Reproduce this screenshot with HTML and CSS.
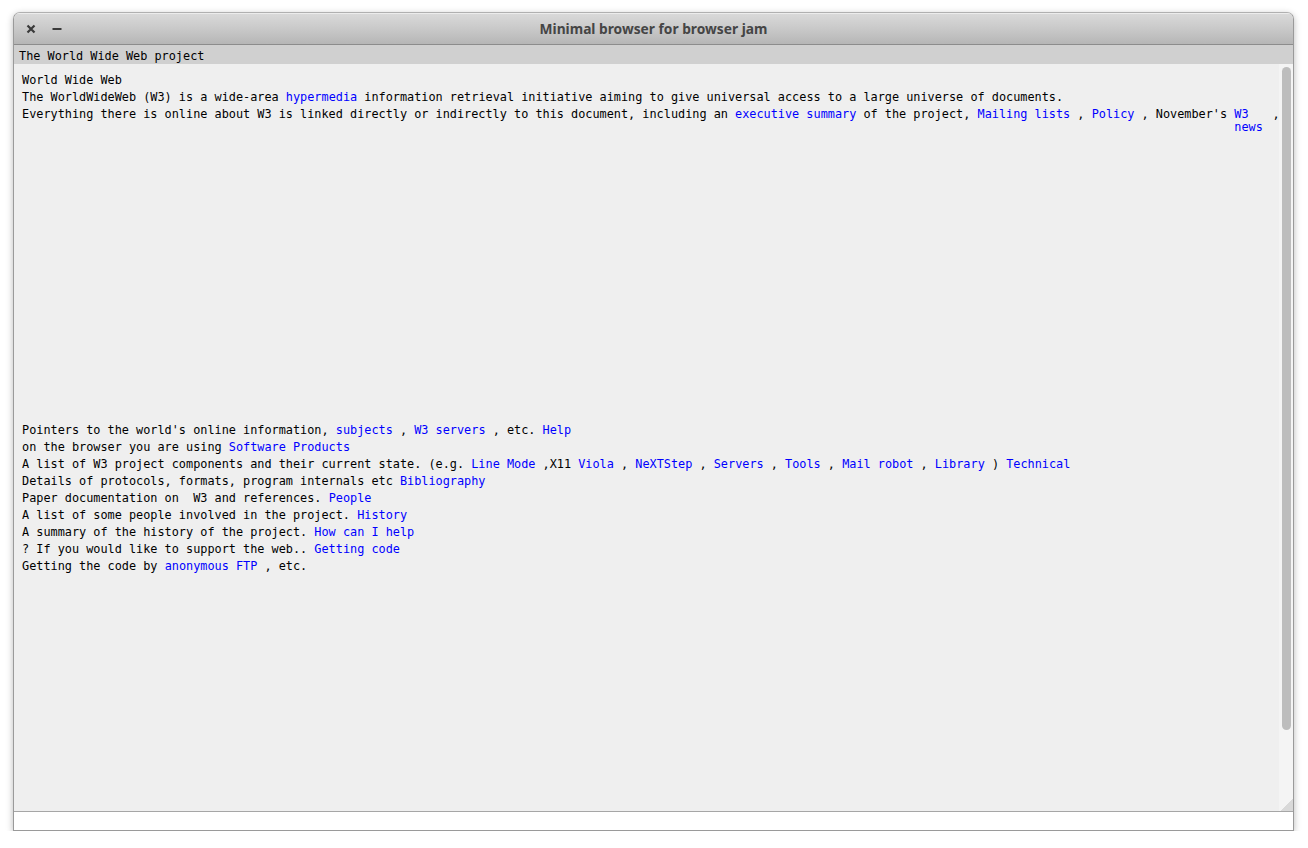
FILE: index.html
```html
<!DOCTYPE html>
<html>
<head>
<meta charset="utf-8">
<title>Minimal browser for browser jam</title>
<link rel="stylesheet" href="styles.css">
</head>
<body>
<div class="window">
  <div class="titlebar">
    <div class="controls">
      <svg class="btn-close" width="10" height="10" viewBox="0 0 10 10"><path d="M1.5 1.5 L8.5 8.5 M8.5 1.5 L1.5 8.5" stroke="#3a3a3a" stroke-width="2.2" stroke-linecap="butt"/></svg>
      <svg class="btn-min" width="10" height="10" viewBox="0 0 10 10"><path d="M0.5 5 H9.5" stroke="#3a3a3a" stroke-width="2"/></svg>
    </div>
    <div class="title">Minimal browser for browser jam</div>
  </div>
  <div class="pagetitle">The World Wide Web project</div>
  <div class="main">
    <div class="content">
      <div class="line">World Wide Web</div>
      <div class="line">The WorldWideWeb (W3) is a wide-area <a>hypermedia</a> information retrieval initiative aiming to give universal access to a large universe of documents.</div>
      <div class="line">Everything there is online about W3 is linked directly or indirectly to this document, including an <a>executive summary</a> of the project, <a>Mailing lists</a> , <a>Policy</a> , November's <a class="wrap">W3 news</a> ,</div>
      <div class="gap"></div>
      <div class="line">Pointers to the world's online information, <a>subjects</a> , <a>W3 servers</a> , etc. <a>Help</a></div>
      <div class="line">on the browser you are using <a>Software Products</a></div>
      <div class="line">A list of W3 project components and their current state. (e.g. <a>Line Mode</a> ,X11 <a>Viola</a> , <a>NeXTStep</a> , <a>Servers</a> , <a>Tools</a> , <a>Mail robot</a> , <a>Library</a> ) <a>Technical</a></div>
      <div class="line">Details of protocols, formats, program internals etc <a>Bibliography</a></div>
      <div class="line">Paper documentation on  W3 and references. <a>People</a></div>
      <div class="line">A list of some people involved in the project. <a>History</a></div>
      <div class="line">A summary of the history of the project. <a>How can I help</a></div>
      <div class="line">? If you would like to support the web.. <a>Getting code</a></div>
      <div class="line">Getting the code by <a>anonymous FTP</a> , etc.</div>
    </div>
    <div class="scrollbar">
      <div class="thumb"></div>
      <div class="corner"></div>
    </div>
  </div>
  <div class="status"></div>
</div>
</body>
</html>
```

FILE: styles.css
```css
html, body {
  margin: 0;
  padding: 0;
  background: #ffffff;
}

.window {
  margin: 12px 0 0 13px;
  width: 1281px;
  height: 819px;
  box-sizing: border-box;
  border: 1px solid #9a9a9a;
  border-top-color: #b0b0b0;
  border-radius: 7px 7px 0 0;
  box-shadow: 0 2px 7px rgba(0, 0, 0, 0.28);
  display: flex;
  flex-direction: column;
  overflow: hidden;
  background: #efefef;
}

.titlebar {
  height: 31px;
  flex: 0 0 auto;
  background: linear-gradient(to bottom, #dadada 0%, #cbcbcb 45%, #b6b6b6 100%);
  border-bottom: 1px solid #8c8c8c;
  box-shadow: inset 0 1px 0 #ececec;
  display: flex;
  align-items: center;
  position: relative;
}

.controls {
  display: flex;
  align-items: center;
  gap: 16px;
  padding-left: 12px;
}

.controls svg {
  display: block;
}

.title {
  position: absolute;
  left: 0;
  right: 0;
  top: 0;
  bottom: 0;
  display: flex;
  align-items: center;
  justify-content: center;
  font-family: "Noto Sans", "Open Sans", sans-serif;
  font-weight: bold;
  font-size: 13.75px;
  color: #454545;
  pointer-events: none;
}

.pagetitle {
  height: 16px;
  padding-top: 3px;
  flex: 0 0 auto;
  background: #d0d0d0;
  font-family: "DejaVu Sans Mono", monospace;
  font-size: 11.85px;
  line-height: 17px;
  padding-left: 5px;
  color: #000;
  white-space: pre;
}

.main {
  flex: 1 1 auto;
  display: flex;
  min-height: 0;
}

.content {
  flex: 1 1 0;
  min-width: 0;
  overflow: hidden;
  background: #efefef;
  padding: 8px 0 0 8px;
  font-family: "DejaVu Sans Mono", monospace;
  font-size: 11.85px;
  line-height: 17px;
  color: #000;
}

.line {
  height: 17px;
  white-space: pre;
}

.content a {
  color: #0000ff;
  text-decoration: none;
}

.content a.wrap {
  display: inline-block;
  width: 31px;
  white-space: normal;
  vertical-align: top;
  line-height: 13px;
  padding-top: 2px;
}

.gap {
  height: 299px;
}

.scrollbar {
  width: 14px;
  flex: 0 0 14px;
  background: #f4f4f4;
  position: relative;
}

.thumb {
  margin: 3px 2px 0 3px;
  height: 663px;
  border-radius: 5px;
  background: #bdbdbd;
}

.corner {
  position: absolute;
  right: 0;
  bottom: 0;
  width: 13px;
  height: 13px;
  background: linear-gradient(to bottom right, transparent 50%, #d9d9d9 50%);
}

.status {
  height: 18px;
  flex: 0 0 auto;
  background: #ffffff;
  border-top: 1px solid #a6a6a6;
}
```
